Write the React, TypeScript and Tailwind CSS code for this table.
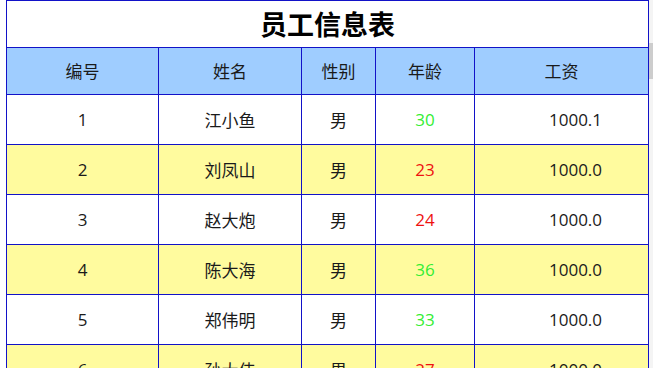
import React from "react";

const rows = [
  { id: 1, name: "江小鱼", sex: "男", age: 30, salary: "1000.1", green: true },
  { id: 2, name: "刘凤山", sex: "男", age: 23, salary: "1000.0", green: false },
  { id: 3, name: "赵大炮", sex: "男", age: 24, salary: "1000.0", green: false },
  { id: 4, name: "陈大海", sex: "男", age: 36, salary: "1000.0", green: true },
  { id: 5, name: "郑伟明", sex: "男", age: 33, salary: "1000.0", green: true },
  { id: 6, name: "孙大伟", sex: "男", age: 27, salary: "1000.0", green: false },
];

const cjk = { fontFamily: '"Noto Sans CJK SC", sans-serif' };

export default function App() {
  return (
    <div
      className="flex h-[368px] w-[653px] overflow-hidden bg-white"
      style={{ fontFamily: '"Segoe UI", "Open Sans", "Noto Sans CJK SC", sans-serif' }}
    >
      <div className="flex-1 pl-[6px]">
        <table className="w-[642px] border-collapse table-fixed text-[17px] text-[#1a1a1a]">
          <colgroup>
            <col className="w-[152px]" />
            <col className="w-[143px]" />
            <col className="w-[74px]" />
            <col className="w-[99px]" />
            <col className="w-[174px]" />
          </colgroup>
          <thead>
            <tr className="h-[47px]">
              <th colSpan={5} className="border border-[#1212c8] text-[27px] font-bold text-black" style={cjk}>
                员工信息表
              </th>
            </tr>
            <tr className="h-[47px] bg-[#9fcdff]">
              {["编号", "姓名", "性别", "年龄", "工资"].map((h) => (
                <th key={h} className="border border-[#1212c8] font-normal" style={cjk}>
                  {h}
                </th>
              ))}
            </tr>
          </thead>
          <tbody>
            {rows.map((r, i) => (
              <tr key={r.id} className={`h-[50px] ${i % 2 === 1 ? "bg-[#fffb9e]" : "bg-white"}`}>
                <td className="border border-[#1212c8] text-center">{r.id}</td>
                <td className="border border-[#1212c8] text-center" style={cjk}>
                  {r.name}
                </td>
                <td className="border border-[#1212c8] text-center" style={cjk}>
                  {r.sex}
                </td>
                <td className={`border border-[#1212c8] text-center ${r.green ? "text-[#33ee33]" : "text-[#ee1111]"}`}>
                  {r.age}
                </td>
                <td className="border border-[#1212c8] pl-[28px] text-center">{r.salary}</td>
              </tr>
            ))}
          </tbody>
        </table>
      </div>
      <div className="w-[5px] bg-[#f4f4f4] pt-[43px]">
        <div className="h-[36px] w-[4px] bg-[#cdcdcd]" />
      </div>
    </div>
  );
}
